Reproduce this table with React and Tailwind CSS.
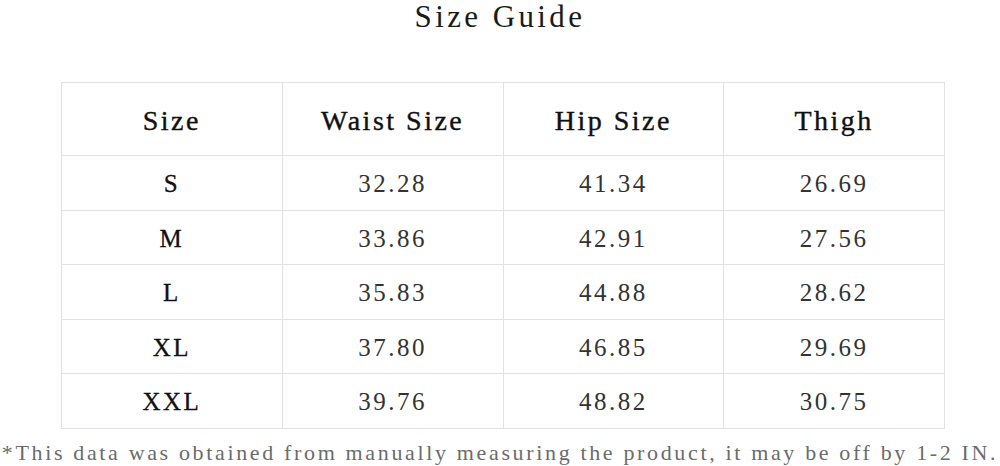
import React from "react";

const rows = [
  ["S", "32.28", "41.34", "26.69"],
  ["M", "33.86", "42.91", "27.56"],
  ["L", "35.83", "44.88", "28.62"],
  ["XL", "37.80", "46.85", "29.69"],
  ["XXL", "39.76", "48.82", "30.75"],
];

const headers = ["Size", "Waist Size", "Hip Size", "Thigh"];

const App = () => {
  return (
    <div className="w-[1000px] h-[466px] bg-white overflow-hidden font-['Liberation_Serif',serif]">
      <div className="h-[34px] flex items-center justify-center text-[31px] leading-[34px] tracking-[3.4px] text-[#1a1a1a]">
        Size Guide
      </div>

      <div className="mt-[48px] pl-[61px]">
        <table className="w-[884px] table-fixed border-collapse">
          <thead>
            <tr className="h-[73px]">
              {headers.map((h) => (
                <th
                  key={h}
                  className="border border-[#e2e2e2] text-center font-normal text-[28px] tracking-[2.5px] text-[#111] [-webkit-text-stroke:0.4px_#111] pt-[3px]"
                >
                  {h}
                </th>
              ))}
            </tr>
          </thead>
          <tbody>
            {rows.map((r) => (
              <tr key={r[0]} className="h-[54.6px]">
                {r.map((c, i) => (
                  <td
                    key={i}
                    className={
                      "border border-[#e2e2e2] text-center text-[25px] tracking-[2.5px] pt-[2px] " +
                      (i === 0 ? "text-[#111] [-webkit-text-stroke:0.3px_#111]" : "text-[#333]")
                    }
                  >
                    {c}
                  </td>
                ))}
              </tr>
            ))}
          </tbody>
        </table>
      </div>

      <div className="h-[48px] flex items-center justify-center whitespace-nowrap text-[22px] tracking-[2.65px] text-[#6b6b6b]">
        *This data was obtained from manually measuring the product, it may be off by 1-2 IN.
      </div>
    </div>
  );
};

export default App;
